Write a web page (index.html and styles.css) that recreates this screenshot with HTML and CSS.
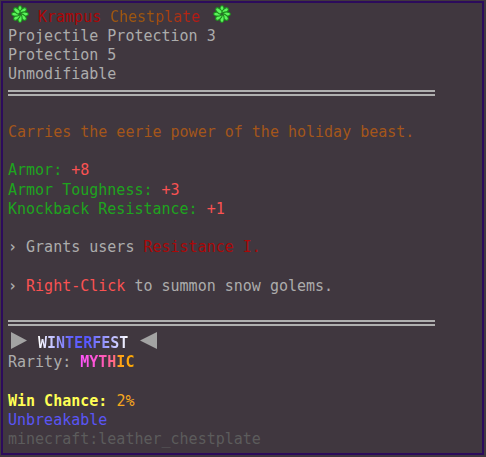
FILE: index.html
```html
<!DOCTYPE html>
<html>
<head>
<meta charset="utf-8">
<link rel="stylesheet" href="styles.css">
</head>
<body>
<div class="tip">
  <div class="ln row">
    <svg class="flake flake-l" viewBox="0 0 18 18" width="18" height="18">
      <g fill="#5cf45c" stroke="#1c8a1c" stroke-width="1.1">
        <ellipse cx="9" cy="4.6" rx="2.1" ry="3.9"/>
        <ellipse cx="9" cy="4.6" rx="2.1" ry="3.9" transform="rotate(45 9 9)"/>
        <ellipse cx="9" cy="4.6" rx="2.1" ry="3.9" transform="rotate(90 9 9)"/>
        <ellipse cx="9" cy="4.6" rx="2.1" ry="3.9" transform="rotate(135 9 9)"/>
        <ellipse cx="9" cy="4.6" rx="2.1" ry="3.9" transform="rotate(180 9 9)"/>
        <ellipse cx="9" cy="4.6" rx="2.1" ry="3.9" transform="rotate(225 9 9)"/>
        <ellipse cx="9" cy="4.6" rx="2.1" ry="3.9" transform="rotate(270 9 9)"/>
        <ellipse cx="9" cy="4.6" rx="2.1" ry="3.9" transform="rotate(315 9 9)"/>
      </g>
      <circle cx="9" cy="9" r="1.6" fill="#2b6e2b"/>
    </svg>
    <span class="title"><span class="krampus">Krampus</span> <span class="chest">Chestplate</span></span>
    <svg class="flake flake-r" viewBox="0 0 18 18" width="18" height="18">
      <g fill="#5cf45c" stroke="#1c8a1c" stroke-width="1.1">
        <ellipse cx="9" cy="4.6" rx="2.1" ry="3.9"/>
        <ellipse cx="9" cy="4.6" rx="2.1" ry="3.9" transform="rotate(45 9 9)"/>
        <ellipse cx="9" cy="4.6" rx="2.1" ry="3.9" transform="rotate(90 9 9)"/>
        <ellipse cx="9" cy="4.6" rx="2.1" ry="3.9" transform="rotate(135 9 9)"/>
        <ellipse cx="9" cy="4.6" rx="2.1" ry="3.9" transform="rotate(180 9 9)"/>
        <ellipse cx="9" cy="4.6" rx="2.1" ry="3.9" transform="rotate(225 9 9)"/>
        <ellipse cx="9" cy="4.6" rx="2.1" ry="3.9" transform="rotate(270 9 9)"/>
        <ellipse cx="9" cy="4.6" rx="2.1" ry="3.9" transform="rotate(315 9 9)"/>
      </g>
      <circle cx="9" cy="9" r="1.6" fill="#2b6e2b"/>
    </svg>
  </div>
  <div class="ln gray">Projectile Protection 3</div>
  <div class="ln gray">Protection 5</div>
  <div class="ln gray">Unmodifiable</div>
  <div class="ln sep"><div class="rule"></div></div>
  <div class="ln"></div>
  <div class="ln lore">Carries the eerie power of the holiday beast.</div>
  <div class="ln"></div>
  <div class="ln green">Armor: <span class="red">+8</span></div>
  <div class="ln green">Armor Toughness: <span class="red">+3</span></div>
  <div class="ln green">Knockback Resistance: <span class="red">+1</span></div>
  <div class="ln"></div>
  <div class="ln gray"><span class="chev">›</span> Grants users <span class="dred">Resistance I.</span></div>
  <div class="ln"></div>
  <div class="ln gray"><span class="chev">›</span> <span class="red">Right-Click</span> to summon snow golems.</div>
  <div class="ln"></div>
  <div class="ln sep"><div class="rule"></div></div>
  <div class="ln row">
    <svg class="tri tri-r" viewBox="0 0 16 17" width="16" height="17"><polygon points="0,0 16,8.5 0,17" fill="#a3a3a3"/></svg>
    <span class="event">WINTERFEST</span>
    <svg class="tri tri-l" viewBox="0 0 17 17" width="17" height="17"><polygon points="17,0 0,8.5 17,17" fill="#a3a3a3"/></svg>
  </div>
  <div class="ln gray">Rarity: <span class="mythic">MYTHIC</span></div>
  <div class="ln"></div>
  <div class="ln"><span class="yellow">Win Chance:</span> <span class="gold">2%</span></div>
  <div class="ln blue">Unbreakable</div>
  <div class="ln dgray">minecraft:leather_chestplate</div>
</div>
</body>
</html>
```
FILE: styles.css
```css
html, body {
  margin: 0;
  padding: 0;
  background: #40373f;
}
body {
  width: 486px;
  height: 457px;
  overflow: hidden;
}
.tip {
  box-sizing: border-box;
  margin: 1px 0 0 1px;
  width: 483px;
  height: 454px;
  border: 2px solid #2c0b5c;
  background: #40373f;
  padding: 4.9px 0 0 5px;
  font-family: "DejaVu Sans Mono", "Liberation Mono", monospace;
  font-size: 15px;
}
.ln {
  height: 19.2px;
  line-height: 19.2px;
  white-space: pre;
}
.row {
  display: flex;
  align-items: center;
}
.flake {
  flex: none;
  margin-top: -6px;
}
.flake-l { margin-left: 3px; margin-right: 9px; }
.flake-r { margin-left: 12px; }
.title { line-height: 19.2px; }
.krampus { color: #aa0606; }
.chest {
  background: linear-gradient(90deg, #a2580f 0%, #a0560f 45%, #b02a16 80%, #bd1414 100%);
  -webkit-background-clip: text;
  background-clip: text;
  color: transparent;
}
.gray { color: #acacac; }
.chev { font-weight: bold; }
.lore { color: #a4561a; }
.green { color: #1ea41e; }
.red { color: #fa5252; }
.dred { color: #aa0808; }
.sep {
  display: flex;
  align-items: center;
}
.rule {
  width: 427px;
  height: 2px;
  margin-top: -3px;
  border-top: 2px solid #b0b0b0;
  border-bottom: 2px solid #b0b0b0;
}
.tri { flex: none; margin-top: -7px; }
.tri-r { margin-left: 3px; margin-right: 11px; }
.tri-l { margin-left: 12px; }
.event {
  font-weight: bold;
  background: linear-gradient(90deg, #ffffff 0%, #c8c8ff 15%, #6464ff 35%, #5555ff 55%, #9a9aff 75%, #ffffff 100%);
  -webkit-background-clip: text;
  background-clip: text;
  color: transparent;
}
.mythic {
  font-weight: bold;
  background: linear-gradient(90deg, #ff55ff 0%, #ff55cc 35%, #ff6688 62%, #ffa21a 72%, #ffaa00 100%);
  -webkit-background-clip: text;
  background-clip: text;
  color: transparent;
}
.yellow { color: #ffff55; font-weight: bold; }
.gold { color: #f7a81e; }
.blue { color: #5a55f5; }
.dgray { color: #5c5c5c; }
```
